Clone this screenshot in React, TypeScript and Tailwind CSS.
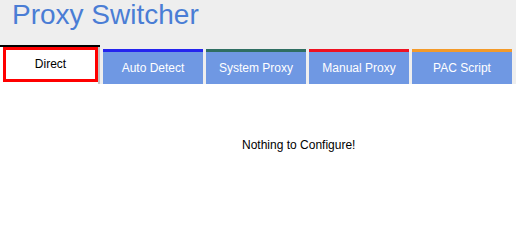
const tabs = [
  { label: "Auto Detect", bar: "border-[#2424ee]" },
  { label: "System Proxy", bar: "border-[#2f6e62]" },
  { label: "Manual Proxy", bar: "border-[#ee1122]" },
  { label: "PAC Script", bar: "border-[#f39a2a]" },
];

const App = () => {
  return (
    <div className="w-[516px] h-[201px] overflow-hidden bg-white font-['Liberation_Sans',Arial,sans-serif]">
      <div className="flex h-[84px] flex-col bg-[#eeeeee]">
        <h1 className="pl-[12px] text-[28px] leading-[29px] text-[#4a7dd5]">Proxy Switcher</h1>
        <div className="mt-auto flex items-end gap-[3px]">
          <div className="flex h-[39px] w-[100px] border-t-2 border-black bg-white">
            <div className="ml-[3px] flex h-[35px] w-[95px] items-center justify-center border-[3px] border-[#ff0000] pb-[2px] text-[12px] leading-[14px] text-black">
              Direct
            </div>
            <div className="ml-auto h-full w-[2px] bg-[#c4c4c4]" />
          </div>
          {tabs.map((tab) => (
            <div
              key={tab.label}
              className={`flex h-[35px] w-[100px] items-center justify-center border-t-[3px] ${tab.bar} bg-[#6f98e3] pb-[1px] text-[12px] leading-[14px] text-white`}
            >
              {tab.label}
            </div>
          ))}
        </div>
      </div>
      <div className="pl-[242px] pt-[54px] text-[12px] leading-[14px] text-black">Nothing to Configure!</div>
    </div>
  );
};

export default App;
